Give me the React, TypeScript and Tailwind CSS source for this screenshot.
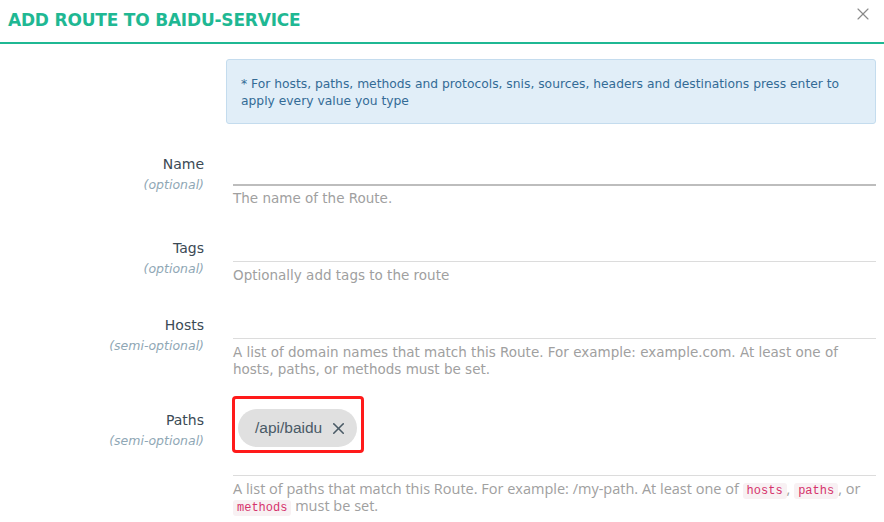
import { X } from "lucide-react";

const font = { fontFamily: "'DejaVu Sans', 'Open Sans', sans-serif" };

function Label({ name, hint }: { name: string; hint: string }) {
    return (
        <div className="w-[204px] shrink-0 text-right pt-[4px]">
            <div className="text-[14px] leading-5 text-[#3b4a55]">{name}</div>
            <div className="text-[12.5px] leading-5 italic text-[#8fa7b5] mt-[1px]">{hint}</div>
        </div>
    );
}

function Code({ children }: { children: string }) {
    return (
        <code className="font-['Liberation_Mono',monospace] text-[12px] leading-none text-[#d6336c] bg-[#f8f1f3] px-[4px] py-[1px] rounded-[3px]">
            {children}
        </code>
    );
}

export default function App() {
    return (
        <div className="w-[884px] h-[522px] bg-white overflow-hidden" style={font}>
            <div className="h-[44px] border-b-[2px] border-[#1fb893] flex items-center justify-between pl-[8px] pr-[11px]">
                <h1 className="text-[17px] font-bold text-[#1fb893] tracking-[-0.2px]">ADD ROUTE TO BAIDU-SERVICE</h1>
                <X className="w-[20px] h-[20px] text-[#8a8a8a] -mt-[14px]" strokeWidth={1.4} />
            </div>

            <div className="ml-[226px] mr-[8px] mt-[15px] h-[65px] bg-[#e1eef8] border border-[#c4dcee] rounded-[3px] px-[14px] pt-[16px] text-[12.3px] leading-[17px] text-[#336b96]">
                * For hosts, paths, methods and protocols, snis, sources, headers and destinations press enter to apply every value you type
            </div>

            {/* Name */}
            <div className="flex mt-[26px]">
                <Label name="Name" hint="(optional)" />
                <div className="flex-1 pl-[29px] pr-[8px]">
                    <div className="h-[36px] border-b-[2px] border-[#bdbdbd]"></div>
                    <p className="mt-[4px] text-[13.5px] leading-[17px] text-[#a0a0a0]">The name of the Route.</p>
                </div>
            </div>

            {/* Tags */}
            <div className="flex mt-[27px]">
                <Label name="Tags" hint="(optional)" />
                <div className="flex-1 pl-[29px] pr-[8px]">
                    <div className="h-[28px] border-b border-[#dcdcdc]"></div>
                    <p className="mt-[5px] text-[13.5px] leading-[17px] text-[#a0a0a0]">Optionally add tags to the route</p>
                </div>
            </div>

            {/* Hosts */}
            <div className="flex mt-[27px]">
                <Label name="Hosts" hint="(semi-optional)" />
                <div className="flex-1 pl-[29px] pr-[8px]">
                    <div className="h-[28px] border-b border-[#dcdcdc]"></div>
                    <p className="mt-[5px] text-[13.5px] leading-[17px] text-[#a0a0a0]">
                        A list of domain names that match this Route. For example: example.com. At least one of hosts, paths, or methods must be set.
                    </p>
                </div>
            </div>

            {/* Paths */}
            <div className="flex mt-[28px]">
                <Label name="Paths" hint="(semi-optional)" />
                <div className="flex-1 pl-[29px] pr-[8px]">
                    <div className="relative h-[70px] border-b border-[#dcdcdc]">
                        <div className="absolute -left-[1px] -top-[10px] w-[132px] h-[57px] border-[3px] border-[#ff1a1a] rounded-[4px]"></div>
                        <div className="ml-[5px] mt-[3px] inline-flex items-center h-[38px] pl-[17px] pr-[9px] rounded-full bg-[#e0e0e0] text-[15.5px] text-[#4a5a66] font-['Liberation_Sans',sans-serif]">
                            /api/baidu
                            <X className="w-[19px] h-[19px] ml-[7px] text-[#4a5a66]" strokeWidth={2} />
                        </div>
                    </div>
                    <p className="mt-[4px] text-[14.5px] leading-[17px] text-[#a0a0a0] font-['Open_Sans',sans-serif]">
                        A list of paths that match this Route. For example: /my-path. At least one of <Code>hosts</Code>, <Code>paths</Code>, or <Code>methods</Code> must be set.
                    </p>
                </div>
            </div>
        </div>
    );
}
